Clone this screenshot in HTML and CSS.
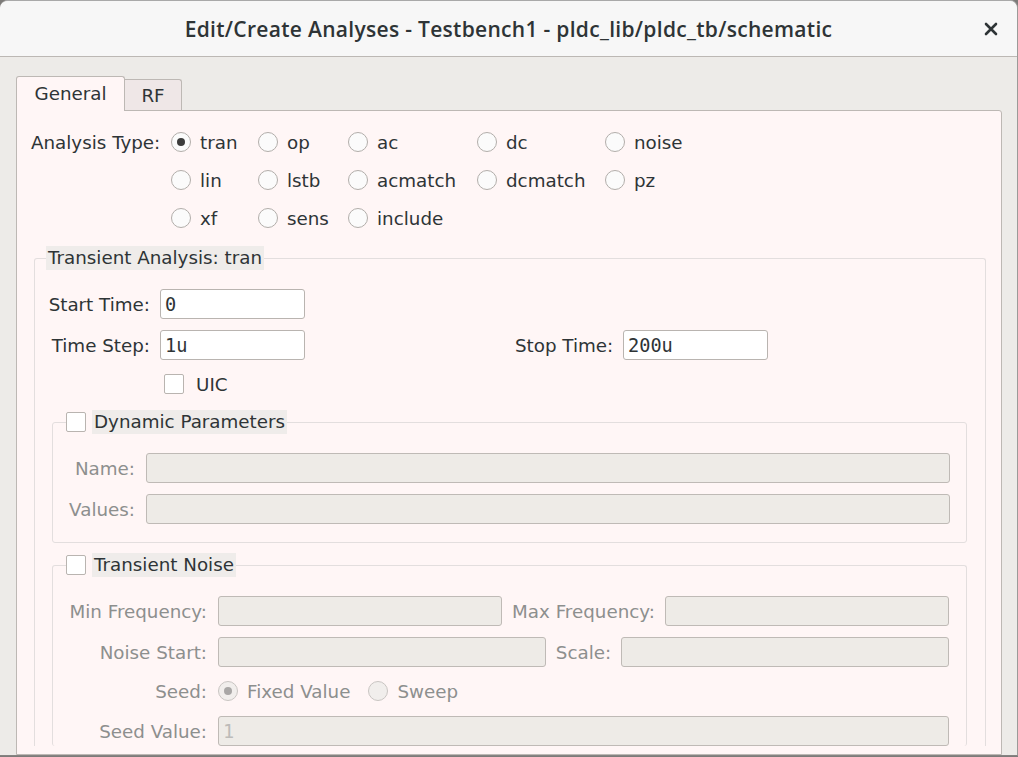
FILE: index.html
```html
<!DOCTYPE html>
<html>
<head>
<meta charset="utf-8">
<title>Edit/Create Analyses</title>
<link rel="stylesheet" href="styles.css">
</head>
<body>
<div class="window">
  <header class="titlebar">
    <div class="title">Edit/Create Analyses - Testbench1 - pldc_lib/pldc_tb/schematic</div>
    <div class="close"><svg width="14" height="14" viewBox="0 0 14 14"><path d="M2 2 L12 12 M12 2 L2 12" stroke="#2e3436" stroke-width="2.6" stroke-linecap="round"/></svg></div>
  </header>
  <main class="content">
    <div class="tabs">
      <div class="tab active">General</div>
      <div class="tab">RF</div>
    </div>
    <section class="panel">
      <div class="analysis">
        <span class="at-label">Analysis Type:</span>
        <span class="radio"><span class="circle on"></span>tran</span>
        <span class="radio"><span class="circle"></span>op</span>
        <span class="radio"><span class="circle"></span>ac</span>
        <span class="radio"><span class="circle"></span>dc</span>
        <span class="radio"><span class="circle"></span>noise</span>
        <span class="radio c2"><span class="circle"></span>lin</span>
        <span class="radio"><span class="circle"></span>lstb</span>
        <span class="radio"><span class="circle"></span>acmatch</span>
        <span class="radio"><span class="circle"></span>dcmatch</span>
        <span class="radio"><span class="circle"></span>pz</span>
        <span class="radio c2"><span class="circle"></span>xf</span>
        <span class="radio"><span class="circle"></span>sens</span>
        <span class="radio"><span class="circle"></span>include</span>
      </div>

      <fieldset class="group tran-group">
        <legend class="legend tran-legend"><span class="legend-text">Transient Analysis: tran</span></legend>
        <div class="tran-body">
          <div class="time-grid">
            <span class="flabel">Start Time:</span>
            <input class="field" value="0">
            <span></span><span></span><span></span>
            <span class="flabel">Time Step:</span>
            <input class="field" value="1u">
            <span></span>
            <span class="flabel left">Stop Time:</span>
            <input class="field" value="200u">
            <span class="check-row c2"><span class="checkbox"></span>UIC</span>
          </div>

          <fieldset class="group sub-group dyn-group">
            <legend class="legend sub-legend"><span class="checkbox"></span><span class="legend-text">Dynamic Parameters</span></legend>
            <div class="dyn-body">
              <span class="flabel dim">Name:</span>
              <div class="field disabled"></div>
              <span class="flabel dim">Values:</span>
              <div class="field disabled"></div>
            </div>
          </fieldset>

          <fieldset class="group sub-group noise-group">
            <legend class="legend sub-legend"><span class="checkbox"></span><span class="legend-text">Transient Noise</span></legend>
            <div class="noise-body">
              <div class="nrow">
                <span class="flabel dim nlabel">Min Frequency:</span>
                <div class="field disabled grow"></div>
                <span class="flabel dim">Max Frequency:</span>
                <div class="field disabled grow"></div>
              </div>
              <div class="nrow">
                <span class="flabel dim nlabel">Noise Start:</span>
                <div class="field disabled grow"></div>
                <span class="flabel dim">Scale:</span>
                <div class="field disabled grow"></div>
              </div>
              <div class="nrow seed-row">
                <span class="flabel dim nlabel">Seed:</span>
                <span class="radio dim"><span class="circle on disabled"></span>Fixed Value</span>
                <span class="radio dim"><span class="circle disabled"></span>Sweep</span>
              </div>
              <div class="nrow seed-value">
                <span class="flabel dim nlabel">Seed Value:</span>
                <div class="field disabled grow ghost">1</div>
              </div>
            </div>
          </fieldset>
        </div>
      </fieldset>
    </section>
  </main>
</div>
</body>
</html>
```

FILE: styles.css
```css
* {
  box-sizing: border-box;
}

html,
body {
  margin: 0;
  padding: 0;
}

body {
  width: 1018px;
  height: 757px;
  overflow: hidden;
  background: #7d7b79;
  font-family: "DejaVu Sans", sans-serif;
  font-size: 18.3px;
  color: #2e3436;
}

.window {
  height: 756px;
  background: #edebe8;
  border-radius: 8px 8px 0 0;
  border-top: 1px solid #a9a9a9;
  border-right: 1px solid #9c9a98;
  border-bottom: 1px solid #858382;
  overflow: hidden;
  display: flex;
  flex-direction: column;
}

.titlebar {
  flex: none;
  height: 56px;
  background: #f7f7f7;
  border-bottom: 1px solid #bcb8b4;
  display: grid;
  grid-template-columns: 1fr auto 1fr;
  align-items: center;
}

.title {
  grid-column: 2;
  font-family: "Open Sans", sans-serif;
  font-weight: 600;
  font-size: 21px;
  letter-spacing: 0.3px;
  color: #2e3436;
  white-space: nowrap;
  padding-top: 1px;
}

.close {
  grid-column: 3;
  justify-self: end;
  width: 24px;
  height: 24px;
  margin-right: 14px;
  display: flex;
  align-items: center;
  justify-content: center;
}

.content {
  flex: 1;
  display: flex;
  flex-direction: column;
  padding: 19px 15px 0 16px;
  min-height: 0;
}

.tabs {
  display: flex;
  align-items: flex-end;
  flex: none;
}

.tab {
  height: 31px;
  width: 57px;
  justify-content: center;
  display: flex;
  align-items: center;
  background: #efe7e7;
  border: 1px solid #bdb8b4;
  border-bottom: none;
  border-left: none;
  border-radius: 0 3px 0 0;
}

.tab.active {
  height: 35px;
  width: 109px;
  background: #fff6f6;
  border-left: 1px solid #bdb8b4;
  border-radius: 3px 3px 0 0;
  margin-bottom: -1px;
  position: relative;
  z-index: 1;
  padding-bottom: 2px;
}

.panel {
  flex: 1;
  background: #fff6f6;
  border: 1px solid #bdb8b4;
  border-radius: 0 3px 0 0;
  padding-top: 12px;
  min-height: 0;
}

.analysis {
  display: grid;
  grid-template-columns: 140px 87px 90px 129px 128px auto;
  grid-auto-rows: 38px;
  align-items: center;
  padding-left: 14px;
}

.c2 {
  grid-column: 2;
}

.radio {
  display: flex;
  align-items: center;
  gap: 9px;
  white-space: nowrap;
}

.circle {
  width: 20px;
  height: 20px;
  border-radius: 50%;
  border: 1px solid #b2aeaa;
  background: #fbfbfb;
  display: flex;
  align-items: center;
  justify-content: center;
  flex: none;
}

.circle.on::after {
  content: "";
  width: 8px;
  height: 8px;
  border-radius: 50%;
  background: #3c3c3c;
}

.circle.disabled {
  background: #f1eeec;
  border-color: #c9c5c2;
}

.circle.on.disabled::after {
  background: #a9a7a6;
}

.group {
  margin: 0;
  padding: 0;
  border: 1px solid #e3dede;
  border-radius: 3px;
  min-width: 0;
}

.legend {
  padding: 0;
  height: 24px;
  display: flex;
  align-items: center;
}

.legend-text {
  background: #efecea;
  line-height: 24px;
  padding: 0 2px;
}

.tran-group {
  margin: 9px 15px 0 17px;
  border-bottom: none;
  border-radius: 3px 3px 0 0;
}

.tran-legend {
  margin-left: 11px;
}

.tran-body {
  padding: 19px 18px 0 17px;
}

.time-grid {
  display: grid;
  grid-template-columns: 102px 145px 190px 98px 145px;
  grid-template-rows: 30px 30px 26px;
  column-gap: 10px;
  row-gap: 11px;
  align-items: center;
  margin-left: -4px;
}

.flabel {
  text-align: right;
  white-space: nowrap;
}

.flabel.left {
  text-align: left;
}

.flabel.dim,
.radio.dim {
  color: #8d8f8e;
}

.field {
  height: 30px;
  width: 100%;
  margin: 0;
  border: 1px solid #b9b4b0;
  border-radius: 3px;
  background: #ffffff;
  font-family: "DejaVu Sans Mono", monospace;
  font-size: 18.6px;
  color: #2e3436;
  padding: 0 4px;
  outline: none;
}

.field.disabled {
  background: #eeebe7;
  border-color: #bfbab6;
}

.field.ghost {
  color: #bdbbb9;
  display: flex;
  align-items: center;
}

.check-row {
  display: flex;
  align-items: center;
  gap: 12px;
  padding-left: 4px;
}

.checkbox {
  width: 20px;
  height: 20px;
  flex: none;
  background: #ffffff;
  border: 1px solid #b9b4b0;
  border-radius: 2px;
}

.sub-group {
  margin-top: 13px;
}

.sub-legend {
  margin-left: 13px;
  gap: 6px;
}

.dyn-body {
  display: grid;
  grid-template-columns: 68px 1fr;
  grid-auto-rows: 30px;
  column-gap: 11px;
  row-gap: 11px;
  align-items: center;
  padding: 19px 16px 18px 14px;
}

.noise-group {
  margin-top: 10px;
  border-bottom: none;
}

.noise-body {
  display: flex;
  flex-direction: column;
  gap: 11px;
  padding: 19px 17px 0 14px;
}

.nrow {
  display: flex;
  align-items: center;
  gap: 10px;
  height: 30px;
}

.nlabel {
  width: 140px;
  flex: none;
  margin-right: 1px;
}

.grow {
  flex: 1;
  width: auto;
}

.seed-row {
  height: 26px;
  gap: 0;
}

.seed-row .nlabel {
  margin-right: 11px;
}

.seed-row .radio + .radio {
  margin-left: 18px;
}

.seed-value {
  margin-top: 1px;
}
```
